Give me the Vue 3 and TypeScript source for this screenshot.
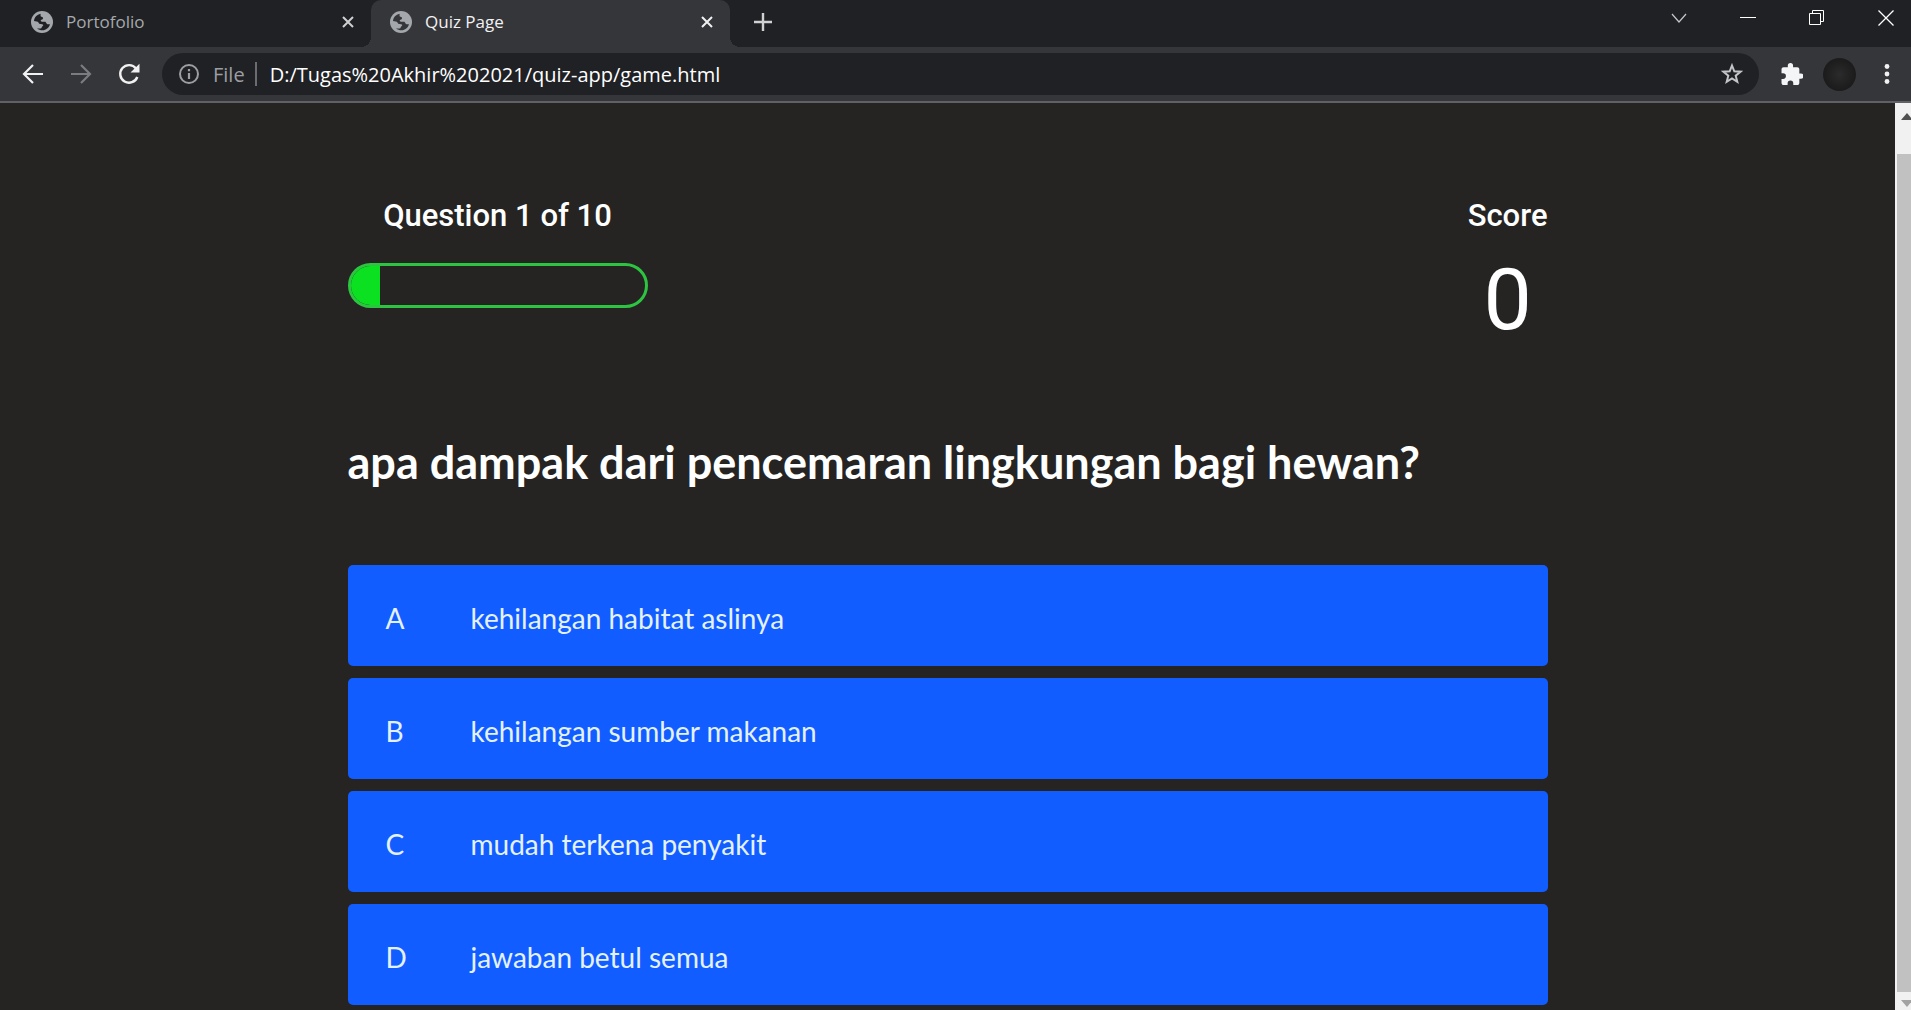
<script setup lang="ts">
import { ref } from 'vue'

interface Choice {
  prefix: string
  text: string
}

const tabs = ['Portofolio', 'Quiz Page']
const activeTab = ref(1)
const address = ref('D:/Tugas%20Akhir%202021/quiz-app/game.html')

const currentQuestion = 1
const totalQuestions = 10
const score = 0

const choices: Choice[] = [
  { prefix: 'A', text: 'kehilangan habitat aslinya' },
  { prefix: 'B', text: 'kehilangan sumber makanan' },
  { prefix: 'C', text: 'mudah terkena penyakit' },
  { prefix: 'D', text: 'jawaban betul semua' },
]
</script>

<template>
  <div class="browser">
    <header class="tab-strip">
      <div
        v-for="(tab, i) in tabs"
        :key="tab"
        class="tab"
        :class="{ active: i === activeTab }"
        @click="activeTab = i"
      >
        <svg class="globe" viewBox="0 0 22 22" aria-hidden="true">
          <circle cx="11" cy="11" r="11" fill="#a4a7ab" />
          <path
            d="M3 10C3.200 6.500 6 3.600 9.500 2.800C10 4.500 8.800 5.200 10.400 5.700C12.800 6 12.400 8.300 10.500 8.700C9 9.200 10 10.800 11.500 10.800H13.800C15.500 10.800 15 13.300 17 13.300H19C18 16.800 15 19.300 11.500 19.300C9.500 19.300 7.500 18.600 6 17.500H9.500C11 17.500 10.500 15.200 12 14.700C13 13.800 11 13 9.500 13C7.500 13 7.800 10.400 5.500 10.400Z"
            fill="currentColor"
          />
        </svg>
        <span class="tab-title">{{ tab }}</span>
        <button class="icon-button tab-close" type="button" :aria-label="`Close ${tab}`">
          <svg width="12" height="12" viewBox="0 0 12 12">
            <path d="M1 1L11 11M11 1L1 11" stroke="currentColor" stroke-width="2" />
          </svg>
        </button>
      </div>
      <button class="icon-button new-tab" type="button" aria-label="New tab">
        <svg width="18" height="18" viewBox="0 0 18 18">
          <path d="M9 0V18M0 9H18" stroke="#d0d1d3" stroke-width="2.400" />
        </svg>
      </button>
      <div class="window-controls">
        <button class="icon-button" type="button" aria-label="Search tabs">
          <svg width="16" height="16" viewBox="0 0 16 16">
            <path d="M1 4L8 12L15 4" fill="none" stroke="#c6c7c9" stroke-width="1.200" />
          </svg>
        </button>
        <button class="icon-button" type="button" aria-label="Minimize">
          <svg width="16" height="16" viewBox="0 0 16 16">
            <path d="M0 7.500H16" stroke="#fff" />
          </svg>
        </button>
        <button class="icon-button" type="button" aria-label="Restore">
          <svg width="16" height="16" viewBox="0 0 16 16">
            <path d="M.5 3.500H11.500V14.500H.5ZM3.500 3.500V.5H14.500V11.500H11.500" fill="none" stroke="#fff" />
          </svg>
        </button>
        <button class="icon-button" type="button" aria-label="Close window">
          <svg width="16" height="16" viewBox="0 0 16 16">
            <path d="M.5 .5L15.500 15.500M15.500 .5L.5 15.500" stroke="#fff" stroke-width="1.300" />
          </svg>
        </button>
      </div>
    </header>

    <nav class="toolbar" aria-label="Browser toolbar">
      <button class="icon-button nav-button" type="button" aria-label="Back">
        <svg width="22" height="20" viewBox="0 0 22 20">
          <path d="M21 10H2M11 1L2 10L11 19" fill="none" stroke="#f1f1f2" stroke-width="2.200" />
        </svg>
      </button>
      <button class="icon-button nav-button" type="button" aria-label="Forward">
        <svg width="22" height="20" viewBox="0 0 22 20">
          <path d="M1 10H20M11 1L20 10L11 19" fill="none" stroke="#7b7c80" stroke-width="2.200" />
        </svg>
      </button>
      <button class="icon-button nav-button" type="button" aria-label="Reload">
        <svg width="22" height="22" viewBox="0 0 22 22">
          <path
            d="M18 5.500A8.800 8.800 0 1 0 19.300 14"
            fill="none"
            stroke="#f1f1f2"
            stroke-width="2.400"
          />
          <path d="M21.500 .8V9.500H12.500Z" fill="#f1f1f2" />
        </svg>
      </button>
      <div class="omnibox">
        <svg width="20" height="20" viewBox="0 0 20 20" aria-hidden="true">
          <circle cx="10" cy="10" r="9" fill="none" stroke="#9b9ea3" stroke-width="2" />
          <path d="M10 9V15M10 5V7.200" stroke="#9b9ea3" stroke-width="2.200" />
        </svg>
        <label class="scheme" for="address">File</label>
        <span class="divider"></span>
        <input id="address" v-model="address" class="address" type="text" spellcheck="false" />
        <button class="icon-button" type="button" aria-label="Bookmark this tab">
          <svg width="22" height="22" viewBox="0 0 22 22">
            <path
              d="M11 2.500L13.300 8.300L19.500 8.700L14.700 12.700L16.300 18.800L11 15.400L5.700 18.800L7.300 12.700L2.500 8.700L8.700 8.300Z"
              fill="none"
              stroke="#c3c5c8"
              stroke-width="2"
            />
          </svg>
        </button>
      </div>
      <button class="icon-button extensions" type="button" aria-label="Extensions">
        <svg width="22" height="22" viewBox="1.500 1 21 21">
          <path
            d="M20.500 11H19V7c0-1.100-.9-2-2-2h-4V3.500a2.500 2.500 0 0 0-5 0V5H4c-1.100 0-2 .9-2 2v3.800h1.500a2.700 2.700 0 0 1 0 5.400H2V20c0 1.100.9 2 2 2h3.800v-1.500a2.700 2.700 0 0 1 5.400 0V22H17c1.100 0 2-.9 2-2v-4h1.500a2.500 2.500 0 0 0 0-5Z"
            fill="#f4f5f7"
          />
        </svg>
      </button>
      <button class="avatar" type="button" aria-label="Profile"></button>
      <button class="icon-button menu" type="button" aria-label="Menu">
        <svg width="6" height="20" viewBox="0 0 6 20">
          <circle cx="3" cy="2.500" r="2.400" fill="#f1f1f2" />
          <circle cx="3" cy="10" r="2.400" fill="#f1f1f2" />
          <circle cx="3" cy="17.500" r="2.400" fill="#f1f1f2" />
        </svg>
      </button>
    </nav>

    <div class="viewport">
      <main class="page">
        <div class="game">
          <section class="hud">
            <div class="hud-item">
              <p class="hud-label">Question {{ currentQuestion }} of {{ totalQuestions }}</p>
              <div class="progress">
                <div
                  class="progress-full"
                  :style="{ width: `${(currentQuestion / totalQuestions) * 100}%` }"
                ></div>
              </div>
            </div>
            <div class="hud-item">
              <p class="hud-label">Score</p>
              <p class="score">{{ score }}</p>
            </div>
          </section>
          <h1 class="question">apa dampak dari pencemaran lingkungan bagi hewan?</h1>
          <div class="choices">
            <button v-for="c in choices" :key="c.prefix" class="choice" type="button">
              <span class="prefix">{{ c.prefix }}</span>
              <span>{{ c.text }}</span>
            </button>
          </div>
        </div>
      </main>
      <div class="scrollbar" aria-hidden="true">
        <svg class="arrow-up" width="10" height="7" viewBox="0 0 10 7">
          <path d="M0 7L6 0L10 4.700V7Z" fill="#505050" />
        </svg>
        <div class="thumb"></div>
        <svg class="arrow-down" width="10" height="7" viewBox="0 0 10 7">
          <path d="M0 0L6 7L10 2.300V0Z" fill="#a3a3a3" />
        </svg>
      </div>
    </div>
  </div>
</template>

<style>
body {
  margin: 0;
  background: #252423;
}
</style>

<style scoped>
.browser {
  display: flex;
  flex-direction: column;
  height: 100vh;
  overflow: hidden;
  color: #fff;
  font-family: 'Open Sans', 'Noto Sans', sans-serif;
}

button {
  margin: 0;
  padding: 0;
  border: 0;
  font: inherit;
  color: inherit;
  cursor: pointer;
}

.icon-button {
  display: flex;
  align-items: center;
  justify-content: center;
  flex: none;
  background: transparent;
}

.tab-strip {
  display: flex;
  height: 47px;
  flex: none;
  padding-left: 12px;
  background: #202124;
}

.tab {
  position: relative;
  display: flex;
  align-items: center;
  box-sizing: border-box;
  width: 359px;
  padding: 0 17px 3px 19px;
  color: #202124;
}

.tab.active {
  border-radius: 10px 10px 0 0;
  background: #35363a;
  color: #35363a;
}

.tab.active::before,
.tab.active::after {
  content: '';
  position: absolute;
  bottom: 0;
  width: 10px;
  height: 10px;
}

.tab.active::before {
  right: 100%;
  background: radial-gradient(circle at 0 0, #202124 10px, #35363a 10px);
}

.tab.active::after {
  left: 100%;
  background: radial-gradient(circle at 100% 0, #202124 10px, #35363a 10px);
}

.globe {
  width: 22px;
  height: 22px;
}

.tab-title {
  flex: 1;
  margin-left: 13px;
  font-size: 17px;
  line-height: 24px;
  color: #a5a9ad;
}

.tab-close {
  color: #cfd0d2;
}

.active .tab-title,
.active .tab-close {
  color: #f1f1f2;
}

.new-tab {
  width: 66px;
  padding-bottom: 3px;
}

.window-controls {
  display: flex;
  gap: 53px;
  margin-left: auto;
  padding: 0 17px 12px 0;
}

.toolbar {
  display: flex;
  align-items: center;
  flex: none;
  height: 54px;
  padding: 0 21px 0 9px;
  border-bottom: 2px solid #606164;
  background: #35363a;
}

.nav-button {
  width: 48px;
  height: 48px;
}

.omnibox {
  display: flex;
  align-items: center;
  flex: 1;
  box-sizing: border-box;
  height: 42px;
  margin: 0 22px 0 9px;
  padding: 0 16px 0 17px;
  border-radius: 21px;
  background: #202124;
  font-size: 20px;
}

.scheme {
  margin-left: 14px;
  color: #9b9ea3;
}

.divider {
  width: 2px;
  height: 24px;
  margin: 0 13px 0 10px;
  background: #6a6c70;
}

.address {
  flex: 1;
  min-width: 0;
  padding: 0;
  border: 0;
  outline: 0;
  background: transparent;
  color: #fff;
  font: inherit;
}

.avatar {
  width: 33px;
  height: 33px;
  margin: 0 28px 0 20px;
  border-radius: 50%;
  background: radial-gradient(circle, #2b2b2b, #141414);
}

.viewport {
  display: flex;
  flex: 1;
  min-height: 0;
}

.page {
  flex: 1;
  overflow: hidden;
  background: #252423;
  font-family: Roboto, sans-serif;
}

.game {
  max-width: 1200px;
  margin: 0 auto;
  padding-top: 93px;
}

.hud {
  display: flex;
  justify-content: space-between;
}

.hud-item {
  text-align: center;
}

.hud-label {
  margin: 0;
  font-size: 31px;
  font-weight: 500;
  line-height: 40px;
}

.progress {
  box-sizing: border-box;
  width: 300px;
  height: 45px;
  margin-top: 27px;
  overflow: hidden;
  border: 3px solid #2dc441;
  border-radius: 23px;
}

.progress-full {
  height: 100%;
  background: #0be021;
}

.score {
  margin: 16px 0 0;
  font-size: 86px;
  font-weight: 400;
  line-height: 96px;
}

.question {
  margin: 78px 0 67px;
  font-family: Lato, sans-serif;
  font-size: 45px;
  font-weight: 700;
  line-height: 72px;
}

.choices {
  display: flex;
  flex-direction: column;
  gap: 12px;
}

.choice {
  display: flex;
  align-items: center;
  height: 101px;
  padding: 4px 38px 0;
  border-radius: 5px;
  background: #115dff;
  color: #e4f2ff;
  font-family: Lato, sans-serif;
  font-size: 28px;
  text-align: left;
}

.prefix {
  width: 85px;
}

.scrollbar {
  display: flex;
  flex-direction: column;
  align-items: flex-end;
  width: 16px;
  background: #f1f1f1;
}

.arrow-up {
  margin-top: 10px;
}

.arrow-down {
  margin: 8px 0 3px;
}

.thumb {
  flex: 1;
  width: 14px;
  margin-top: 34px;
  background: #c1c1c1;
}
</style>
